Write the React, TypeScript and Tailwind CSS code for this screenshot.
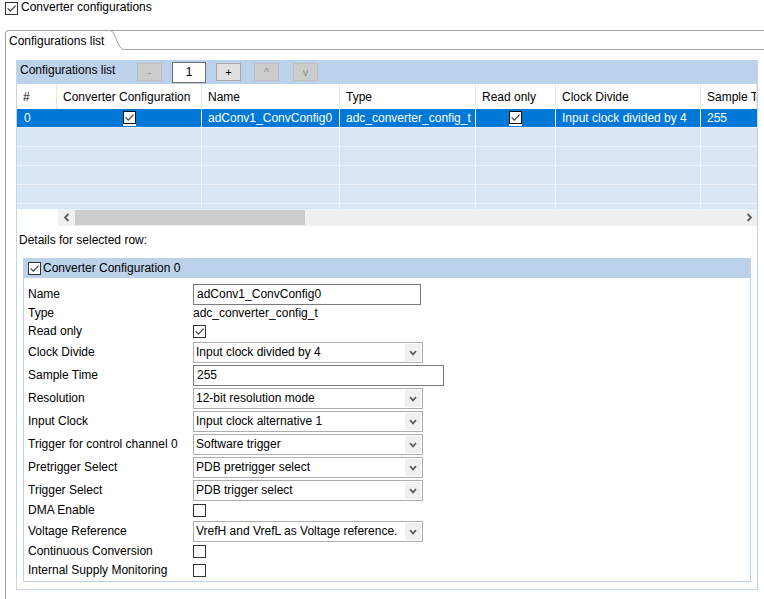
import React from "react"

const font = "font-['Liberation_Sans',Arial,sans-serif]"

function Check({ checked = false, dark = false }: { checked?: boolean; dark?: boolean }) {
  return (
    <span
      className={`inline-flex w-[13px] h-[13px] shrink-0 items-center justify-center bg-white border ${
        dark ? "border-[#111111]" : "border-[#333333]"
      }`}
    >
      {checked && (
        <svg width="11" height="11" viewBox="0 0 11 11">
          <path d="M1.6 5.4 L4.3 8.1 L9.6 2.6" fill="none" stroke="#444444" strokeWidth="1.3" />
        </svg>
      )}
    </span>
  )
}

function Select({ value }: { value: string }) {
  return (
    <div className="w-[230px] h-[21px] border border-[#adadad] bg-white flex items-center pl-[2px]">
      <span className="flex-1 whitespace-nowrap overflow-hidden leading-[15px]">{value}</span>
      <span className="w-[16px] h-[17px] mr-[1px] bg-[#f0f0f0] flex items-center justify-center">
        <svg width="8" height="6" viewBox="0 0 8 6">
          <path d="M1 1.2 L4 4.4 L7 1.2" fill="none" stroke="#5f5f5f" strokeWidth="1.7" />
        </svg>
      </span>
    </div>
  )
}

function TextInput({ value, width }: { value: string; width: string }) {
  return (
    <div className={`${width} h-[21px] border border-[#7a7a7a] bg-white flex items-center pl-[3px]`}>
      <span className="leading-[15px]">{value}</span>
    </div>
  )
}

type Row = {
  label: string
  kind: "input" | "text" | "check" | "select"
  value?: string
  checked?: boolean
  cls: string
  width?: string
}

const detailRows: Row[] = [
  { label: "Name", kind: "input", value: "adConv1_ConvConfig0", cls: "h-[21px] mt-[6px]", width: "w-[228px]" },
  { label: "Type", kind: "text", value: "adc_converter_config_t", cls: "h-[17px]" },
  { label: "Read only", kind: "check", checked: true, cls: "h-[18px]" },
  { label: "Clock Divide", kind: "select", value: "Input clock divided by 4", cls: "h-[21px] mt-[2px]" },
  { label: "Sample Time", kind: "input", value: "255", cls: "h-[21px] mt-[2px]", width: "w-[251px]" },
  { label: "Resolution", kind: "select", value: "12-bit resolution mode", cls: "h-[21px] mt-[2px]" },
  { label: "Input Clock", kind: "select", value: "Input clock alternative 1", cls: "h-[21px] mt-[2px]" },
  { label: "Trigger for control channel 0", kind: "select", value: "Software trigger", cls: "h-[21px] mt-[2px]" },
  { label: "Pretrigger Select", kind: "select", value: "PDB pretrigger select", cls: "h-[21px] mt-[2px]" },
  { label: "Trigger Select", kind: "select", value: "PDB trigger select", cls: "h-[21px] mt-[2px]" },
  { label: "DMA Enable", kind: "check", cls: "h-[18px]" },
  { label: "Voltage Reference", kind: "select", value: "VrefH and VrefL as Voltage reference.", cls: "h-[21px] mt-[2px]" },
  { label: "Continuous Conversion", kind: "check", cls: "h-[19px]" },
  { label: "Internal Supply Monitoring", kind: "check", cls: "h-[18px]" },
]

const columns = [
  { title: "#", w: "w-[40px]" },
  { title: "Converter Configuration", w: "w-[145px]" },
  { title: "Name", w: "w-[138px]" },
  { title: "Type", w: "w-[136px]" },
  { title: "Read only", w: "w-[80px]" },
  { title: "Clock Divide", w: "w-[145px]" },
  { title: "Sample T", w: "w-[56px]" },
]

function SmallButton({ label, enabled = false }: { label: string; enabled?: boolean }) {
  return (
    <span
      className={`w-[25px] h-[18px] flex items-center justify-center border text-[11px] leading-none ${
        enabled
          ? "bg-[#e1e1e1] border-[#a8a8a8] text-black"
          : "bg-[#cccccc] border-[#bfbfbf] text-[#8a8a8a]"
      }`}
    >
      {label}
    </span>
  )
}

export default function App() {
  return (
    <div className={`${font} text-[12px] text-black bg-white w-[764px] h-[599px] overflow-hidden`}>
      {/* top checkbox */}
      <div className="h-[30px] flex items-start">
        <span className="ml-[5px] mt-[1px]">
          <Check checked />
        </span>
        <span className="ml-[3px] leading-[15px]">Converter configurations</span>
      </div>

      <div className="ml-[5px]">
        {/* tab header */}
        <div className="h-[20px] flex border-t border-l border-[#a0a0a0] rounded-tl-[4px]">
          <div className="pl-[3px] pr-[6px] flex items-center leading-[16px]">Configurations list</div>
          <svg width="14" height="20" viewBox="0 0 14 20" className="-mt-[1px] shrink-0">
            <path d="M0 0.5 C6 0.5 7 19.5 14 19.5" fill="none" stroke="#a0a0a0" strokeWidth="1" />
          </svg>
          <div className="flex-1 border-b border-[#a0a0a0]" />
        </div>

        {/* tab content */}
        <div className="border-l border-[#a0a0a0] pt-[10px] pb-[12px]">
          <div className="ml-[10px] w-[742px] border-x border-b border-[#c3d5e8]">
            {/* list toolbar */}
            <div className="h-[24px] bg-[#bcd2ea] flex items-center">
              <span className="w-[120px] pl-[3px] leading-[15px] -mt-[3px]">Configurations list</span>
              <SmallButton label="-" />
              <span className="ml-[10px] w-[34px] h-[21px] bg-white border border-[#6f6f6f] flex items-center justify-center leading-none">
                1
              </span>
              <span className="ml-[10px]">
                <SmallButton label="+" enabled />
              </span>
              <span className="ml-[13px]">
                <SmallButton label="^" />
              </span>
              <span className="ml-[14px]">
                <SmallButton label="v" />
              </span>
            </div>

            {/* table */}
            <div className="w-[740px] overflow-hidden">
              <div className="flex h-[25px] bg-white">
                {columns.map((c) => (
                  <div
                    key={c.title}
                    className={`${c.w} shrink-0 h-full border-r border-[#e5e5e5] pl-[6px] flex items-center whitespace-nowrap overflow-hidden`}
                  >
                    {c.title}
                  </div>
                ))}
              </div>
              <div className="h-[100px] overflow-hidden">
                <div className="flex h-[19px] bg-[#0078d7] text-white border-b border-[#e9f0f8]">
                  <div className="w-[40px] shrink-0 pl-[7px] flex items-center">0</div>
                  <div className="w-[145px] shrink-0 border-r border-white flex items-center justify-center">
                    <span className="border-b-2 border-white flex">
                      <Check checked dark />
                    </span>
                  </div>
                  <div className="w-[138px] shrink-0 border-r border-white pl-[6px] flex items-center whitespace-nowrap overflow-hidden">
                    adConv1_ConvConfig0
                  </div>
                  <div className="w-[136px] shrink-0 border-r border-white pl-[6px] flex items-center whitespace-nowrap overflow-hidden">
                    adc_converter_config_t
                  </div>
                  <div className="w-[80px] shrink-0 border-r border-white flex items-center justify-center">
                    <span className="border-b-2 border-white flex">
                      <Check checked dark />
                    </span>
                  </div>
                  <div className="w-[145px] shrink-0 border-r border-white pl-[6px] flex items-center whitespace-nowrap overflow-hidden">
                    Input clock divided by 4
                  </div>
                  <div className="w-[56px] shrink-0 pl-[6px] flex items-center">255</div>
                </div>
                {[0, 1, 2, 3, 4].map((r) => (
                  <div key={r} className="flex h-[19px] bg-[#d9e6f3] border-b border-[#eef3f9]">
                    <div className="w-[40px] shrink-0" />
                    <div className="w-[145px] shrink-0 border-r border-[#f1f5fa]" />
                    <div className="w-[138px] shrink-0 border-r border-[#f1f5fa]" />
                    <div className="w-[136px] shrink-0 border-r border-[#f1f5fa]" />
                    <div className="w-[80px] shrink-0 border-r border-[#f1f5fa]" />
                    <div className="w-[145px] shrink-0 border-r border-[#f1f5fa]" />
                    <div className="w-[56px] shrink-0" />
                  </div>
                ))}
              </div>
              {/* horizontal scrollbar */}
              <div className="flex h-[17px]">
                <div className="w-[41px] shrink-0 bg-white" />
                <div className="flex-1 bg-[#f0f0f0] flex items-center">
                  <span className="w-[17px] h-full flex items-center justify-center">
                    <svg width="8" height="9" viewBox="0 0 8 9">
                      <path d="M5.5 1 L2 4.5 L5.5 8" fill="none" stroke="#606060" strokeWidth="1.8" />
                    </svg>
                  </span>
                  <span className="w-[230px] h-[15px] bg-[#cdcdcd]" />
                  <span className="flex-1" />
                  <span className="w-[17px] h-full flex items-center justify-center">
                    <svg width="8" height="9" viewBox="0 0 8 9">
                      <path d="M2.5 1 L6 4.5 L2.5 8" fill="none" stroke="#606060" strokeWidth="1.8" />
                    </svg>
                  </span>
                </div>
              </div>
            </div>

            {/* details label */}
            <div className="h-[32px] pt-[6px] pl-[2px] leading-[16px]">Details for selected row:</div>

            {/* details group */}
            <div className="mx-[6px] mb-[7px]">
              <div className="h-[20px] bg-[#bcd2ea] flex items-center pl-[5px]">
                <Check checked />
                <span className="ml-[2px] leading-[15px]">Converter Configuration 0</span>
              </div>
              <div className="border-x border-b border-[#bcd2ea] pl-[4px] pb-[2px] flex flex-col">
                {detailRows.map((row) => (
                  <div key={row.label} className={`${row.cls} flex items-center`}>
                    <span className="w-[165px] shrink-0 whitespace-nowrap leading-[15px]">{row.label}</span>
                    {row.kind === "input" && <TextInput value={row.value ?? ""} width={row.width ?? "w-[228px]"} />}
                    {row.kind === "text" && <span className="leading-[15px]">{row.value}</span>}
                    {row.kind === "check" && <Check checked={row.checked} />}
                    {row.kind === "select" && <Select value={row.value ?? ""} />}
                  </div>
                ))}
              </div>
            </div>
          </div>
        </div>
      </div>
    </div>
  )
}
